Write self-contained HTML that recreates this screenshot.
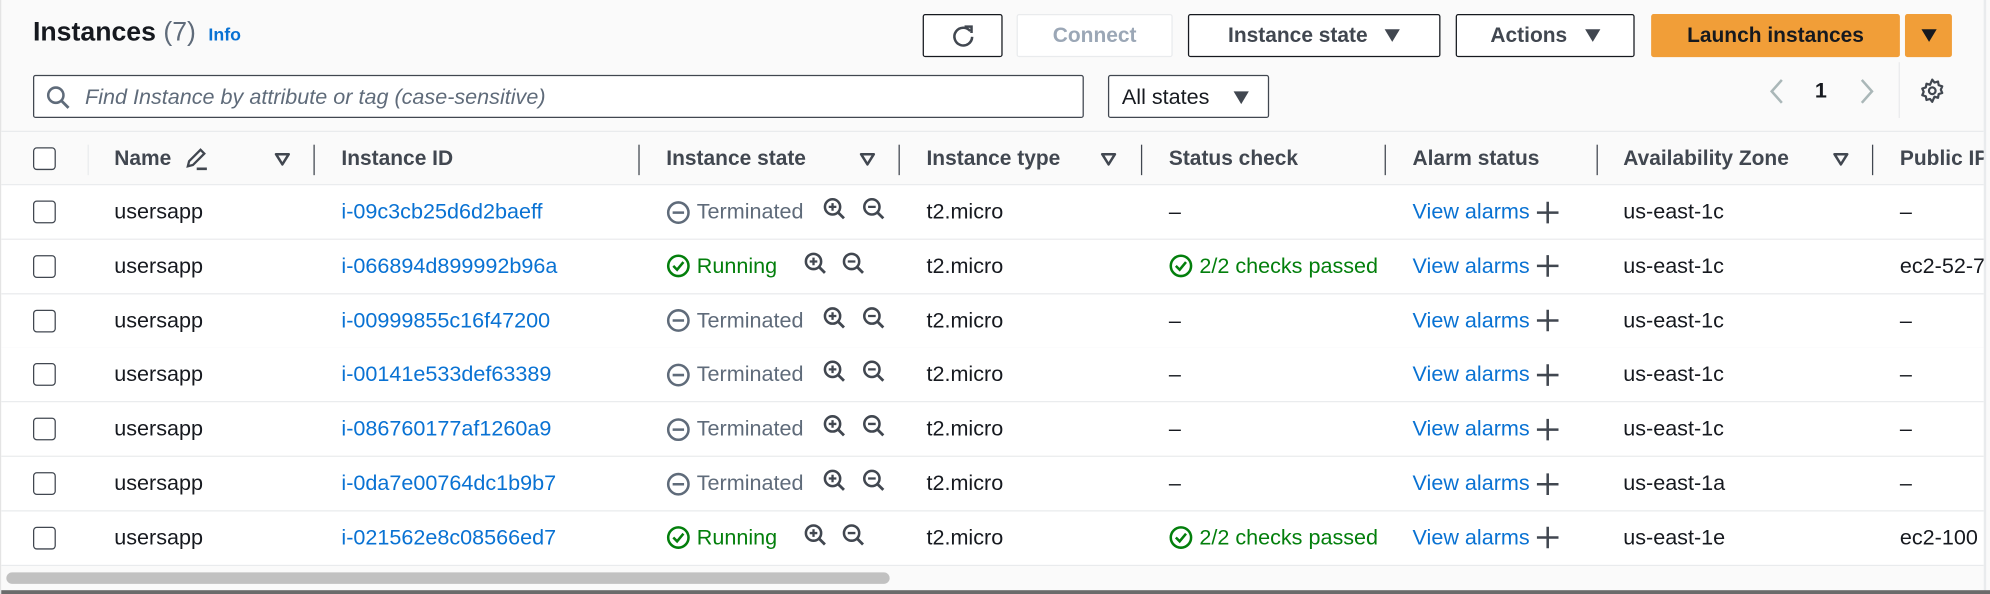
<!DOCTYPE html>
<html><head><meta charset="utf-8"><style>
*{box-sizing:border-box;margin:0;padding:0}
html,body{width:1990px;height:594px;overflow:hidden;background:#fff}
#s{position:absolute;left:0;top:0;width:1568px;height:468px;transform:scale(1.26913,1.26923);transform-origin:0 0;font-family:"Liberation Sans",sans-serif;color:#16191f;background:#fafafa;border-left:1px solid #e4e4e4}
.a{position:absolute;white-space:nowrap}
.btn{position:absolute;border:1px solid #16191f;border-radius:2px;background:#fff;font-weight:bold;font-size:16.5px;color:#414750;display:flex;align-items:center;justify-content:center}
.hd{position:absolute;left:0;top:103px;width:1562px;height:43px;background:#fafafa;border-top:1px solid #e9ebed;border-bottom:1px solid #e9ebed;overflow:hidden}
.row{position:absolute;left:0;width:1562px;height:43px;background:#fff;border-bottom:1px solid #e9ebed;overflow:hidden}
.h{position:absolute;top:0;height:42px;display:flex;align-items:center;font-weight:bold;font-size:16.5px;color:#414750;white-space:nowrap}
.dv{position:absolute;top:10px;width:1px;height:24px;background:#414750}
.c{position:absolute;top:0;height:42px;display:flex;align-items:center;font-size:17px;white-space:nowrap}
.cb{position:absolute;left:25px;width:18px;height:18px;border:1.5px solid #414750;border-radius:3px;background:#fff}
.lk{color:#0972d3}
.tri{display:inline-block;width:0;height:0;border-left:6px solid transparent;border-right:6px solid transparent;border-top:10px solid #414750}
</style></head><body><div id="s">
<div class="a" style="left:25px;top:14px;font-size:21px;font-weight:bold">Instances <span style="font-weight:normal;color:#5f6b7a">(7)</span> <span style="font-size:14px;color:#0972d3;font-weight:bold;margin-left:4px">Info</span></div>

<div class="btn" style="left:726px;top:11px;width:63px;height:34px"><svg width="20" height="20" viewBox="0 0 20 20"><path d="M15.5 6.5A7 7 0 1 0 17 11" fill="none" stroke="#414750" stroke-width="2"/><path d="M11 3h5.5v5" fill="none" stroke="#414750" stroke-width="2"/></svg></div>
<div class="btn" style="left:800px;top:11px;width:123px;height:34px;border-color:#e9ebed;color:#9ba7b6">Connect</div>
<div class="btn" style="left:935px;top:11px;width:199px;height:34px">Instance state&nbsp;&nbsp;&nbsp;<span class="tri"></span></div>
<div class="btn" style="left:1146px;top:11px;width:141px;height:34px">Actions&nbsp;&nbsp;&nbsp;<span class="tri"></span></div>
<div class="btn" style="left:1300px;top:11px;width:196px;height:34px;background:#f19e38;border-color:#f19e38;color:#16191f">Launch instances</div>
<div class="btn" style="left:1500px;top:11px;width:37px;height:34px;background:#f19e38;border-color:#f19e38"><span class="tri" style="border-top-color:#16191f"></span></div>

<div class="a" style="left:25px;top:59px;width:828px;height:34px;border:1px solid #414750;border-radius:2px;background:#fff"></div>
<svg class="a" style="left:35px;top:67px" width="20" height="20" viewBox="0 0 20 20"><circle cx="8" cy="8" r="6" fill="none" stroke="#5f6b7a" stroke-width="2"/><path d="M12.5 12.5L18 18" stroke="#5f6b7a" stroke-width="2.2"/></svg>
<div class="a" style="left:66px;top:67px;font-size:17px;font-style:italic;color:#5f6b7a">Find Instance by attribute or tag (case-sensitive)</div>
<div class="a" style="left:872px;top:59px;width:127px;height:34px;border:1px solid #414750;border-radius:2px;background:#fff"></div>
<div class="a" style="left:883px;top:67px;font-size:17px">All states</div>
<span class="a tri" style="left:971px;top:72px"></span>

<svg class="a" style="left:1391px;top:61px" width="16" height="22" viewBox="0 0 16 22"><path d="M12 2L4 11l8 9" fill="none" stroke="#aab7b8" stroke-width="2"/></svg>
<div class="a" style="left:1429px;top:62px;font-size:17px;font-weight:bold">1</div>
<svg class="a" style="left:1462px;top:61px" width="16" height="22" viewBox="0 0 16 22"><path d="M4 2l8 9-8 9" fill="none" stroke="#aab7b8" stroke-width="2"/></svg>
<div class="a" style="left:1495px;top:49px;width:1px;height:44px;background:#e9ebed"></div>
<svg class="a" style="left:1511px;top:61px" width="21" height="21" viewBox="0 0 24 24"><path d="M12 2l2 2.6 3.2-.9.6 3.3 3.2 1-1.3 3 1.3 3-3.2 1-.6 3.3-3.2-.9L12 22l-2-2.6-3.2.9-.6-3.3-3.2-1 1.3-3-1.3-3 3.2-1 .6-3.3 3.2.9z" fill="none" stroke="#414750" stroke-width="2" stroke-linejoin="round"/><circle cx="12" cy="12" r="3" fill="none" stroke="#414750" stroke-width="2"/></svg>
<div class="a" style="left:1562px;top:0;width:2px;height:468px;background:#e9ebed"></div>

<div class="hd">
<div class="cb" style="top:12px"></div>
<div class="a" style="left:68px;top:10px;width:1px;height:24px;background:#e9ebed"></div>
<div class="h" style="left:89px">Name</div>
<svg class="a" style="left:144px;top:11px" width="20" height="20" viewBox="0 0 20 20"><path d="M3 16l1-4L13 3l3 3-9 9z" fill="none" stroke="#414750" stroke-width="1.8"/><path d="M10 18h8" stroke="#414750" stroke-width="2"/></svg>
<svg class="a" style="left:215px;top:16px" width="13" height="11"><path d="M1.5 1.5h10L6.5 9.5z" fill="none" stroke="#414750" stroke-width="2" stroke-linejoin="round"/></svg>
<div class="dv" style="left:246px"></div>
<div class="h" style="left:268px">Instance ID</div>
<div class="dv" style="left:502px"></div>
<div class="h" style="left:524px">Instance state</div>
<svg class="a" style="left:676px;top:16px" width="13" height="11"><path d="M1.5 1.5h10L6.5 9.5z" fill="none" stroke="#414750" stroke-width="2" stroke-linejoin="round"/></svg>
<div class="dv" style="left:707px"></div>
<div class="h" style="left:729px">Instance type</div>
<svg class="a" style="left:866px;top:16px" width="13" height="11"><path d="M1.5 1.5h10L6.5 9.5z" fill="none" stroke="#414750" stroke-width="2" stroke-linejoin="round"/></svg>
<div class="dv" style="left:898px"></div>
<div class="h" style="left:920px">Status check</div>
<div class="dv" style="left:1090px"></div>
<div class="h" style="left:1112px">Alarm status</div>
<div class="dv" style="left:1257px"></div>
<div class="h" style="left:1278px">Availability Zone</div>
<svg class="a" style="left:1443px;top:16px" width="13" height="11"><path d="M1.5 1.5h10L6.5 9.5z" fill="none" stroke="#414750" stroke-width="2" stroke-linejoin="round"/></svg>
<div class="dv" style="left:1474px"></div>
<div class="h" style="left:1496px">Public IP</div>
</div>

<div id="rows"></div>
<div class="a" style="left:0;top:446px;width:1562px;height:20px;background:#fafafa"></div>
<div class="a" style="left:4px;top:451px;width:696px;height:9px;border-radius:5px;background:#c1c1c1"></div>
<div class="a" style="left:0;top:465px;width:1568px;height:3px;background:#6b6b6b"></div>
</div>
<script>
var d=[["i-09c3cb25d6d2baeff",0,"us-east-1c","–"],["i-066894d899992b96a",1,"us-east-1c","ec2-52-7"],["i-00999855c16f47200",0,"us-east-1c","–"],["i-00141e533def63389",0,"us-east-1c","–"],["i-086760177af1260a9",0,"us-east-1c","–"],["i-0da7e00764dc1b9b7",0,"us-east-1a","–"],["i-021562e8c08566ed7",1,"us-east-1e","ec2-100"]];
var zi=function(x,p){return '<svg class="a" style="left:'+x+'px;top:9px" width="19" height="19" viewBox="0 0 19 19"><circle cx="8" cy="8" r="6" fill="none" stroke="#414750" stroke-width="2"/><path d="M12.5 12.5L17 17" stroke="#414750" stroke-width="2.2"/><path d="M5 8h6'+(p?'M8 5v6':'')+'" stroke="#414750" stroke-width="1.8"/></svg>';};
var ok='<svg width="19" height="19" viewBox="0 0 19 19" style="margin-right:5px"><circle cx="9.5" cy="9.5" r="8" fill="none" stroke="#037f0c" stroke-width="2"/><path d="M5.5 9.5l3 3 5-6" fill="none" stroke="#037f0c" stroke-width="2"/></svg>';
var term='<svg width="19" height="19" viewBox="0 0 19 19" style="margin-right:5px"><circle cx="9.5" cy="9.5" r="8" fill="none" stroke="#5f6b7a" stroke-width="2"/><path d="M5 9.5h9" stroke="#5f6b7a" stroke-width="2"/></svg>';
var h='';
d.forEach(function(r,i){var t=146+i*42.8;
h+='<div class="row" style="top:'+t+'px"><div class="cb" style="top:12px"></div><div class="c" style="left:89px">usersapp</div><div class="c lk" style="left:268px">'+r[0]+'</div>';
if(r[1]){h+='<div class="c" style="left:524px;color:#037f0c">'+ok+'Running</div>'+zi(632,1)+zi(662,0)+'<div class="c" style="left:920px;color:#037f0c">'+ok+'2/2 checks passed</div>';}
else{h+='<div class="c" style="left:524px;color:#5f6b7a">'+term+'Terminated</div>'+zi(647,1)+zi(678,0)+'<div class="c" style="left:920px">–</div>';}
h+='<div class="c" style="left:729px">t2.micro</div><div class="c lk" style="left:1112px">View alarms&nbsp;<svg width="19" height="19" viewBox="0 0 19 19"><path d="M9.5 1v17M1 9.5h17" stroke="#414750" stroke-width="2"/></svg></div><div class="c" style="left:1278px">'+r[2]+'</div><div class="c" style="left:1496px">'+r[3]+'</div></div>';});
document.getElementById('rows').innerHTML=h;
</script>
</body></html>
